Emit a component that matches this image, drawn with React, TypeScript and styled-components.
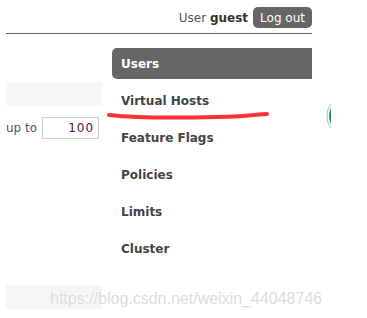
import React from 'react';
import styled, { createGlobalStyle } from 'styled-components';

const GlobalStyle = createGlobalStyle`
  html, body {
    margin: 0;
    padding: 0;
    background: #fff;
  }
  body {
    font-family: 'DejaVu Sans', Verdana, sans-serif;
    font-size: 12px;
    color: #444;
  }
`;

const Page = styled.div`
  position: relative;
  width: 367px;
  height: 318px;
  overflow: hidden;
`;

const Content = styled.div`
  width: 306px;
  margin-left: 6px;
`;

const Header = styled.header`
  display: flex;
  justify-content: flex-end;
  align-items: center;
  gap: 5px;
  height: 34px;
  padding-top: 2px;
  box-sizing: border-box;
  border-bottom: 1px solid #666;
  color: #555;
`;

const UserName = styled.b`
  color: #333;
`;

const LogoutButton = styled.button`
  font: inherit;
  color: #fff;
  background: #666;
  border: none;
  border-radius: 5px;
  height: 21px;
  padding: 0 7px;
  cursor: pointer;
`;

const Main = styled.div`
  display: flex;
  gap: 10px;
`;

const Side = styled.div`
  width: 96px;
  display: flex;
  flex-direction: column;
`;

const GreyBlock = styled.div<{ $top: number }>`
  height: 24px;
  margin-top: ${(p) => p.$top}px;
  background: #f6f6f6;
`;

const LimitRow = styled.label`
  display: flex;
  align-items: center;
  gap: 5px;
  margin-top: 11px;
  color: #555;
`;

const LimitInput = styled.input`
  width: 57px;
  height: 22px;
  box-sizing: border-box;
  border: 1px solid #ccc;
  font: inherit;
  color: #513;
  text-align: right;
  padding: 0 4px;
  letter-spacing: 1px;
`;

const Menu = styled.ul`
  list-style: none;
  margin: 14px 0 0;
  padding: 0;
  width: 200px;
`;

const MenuItem = styled.li<{ $active?: boolean }>`
  height: 31px;
  margin-bottom: 6px;
  display: flex;
  align-items: center;
  padding-left: 9px;
  font-weight: bold;
  border-radius: 5px 0 0 5px;
  color: ${(p) => (p.$active ? '#fff' : '#444')};
  background: ${(p) => (p.$active ? '#666' : 'transparent')};
`;

const Scribble = styled.svg`
  position: absolute;
  left: 106px;
  top: 111px;
`;

const Bubble = styled.svg`
  position: absolute;
  left: 324px;
  top: 100px;
`;

const Watermark = styled.div`
  position: absolute;
  left: 50px;
  top: 290px;
  font-family: 'Liberation Sans', Arial, sans-serif;
  font-size: 16px;
  color: #dcdcdc;
  text-shadow: 0 0 1px #fff;
`;

const items = ['Users', 'Virtual Hosts', 'Feature Flags', 'Policies', 'Limits', 'Cluster'];

export default function App() {
  return (
    <Page>
      <GlobalStyle />
      <Content>
        <Header>
          <span>
            User <UserName>guest</UserName>
          </span>
          <LogoutButton>Log out</LogoutButton>
        </Header>
        <Main>
          <Side>
            <GreyBlock $top={48} />
            <LimitRow>
              up to <LimitInput defaultValue="100" />
            </LimitRow>
            <GreyBlock $top={146} />
          </Side>
          <Menu>
            {items.map((it, i) => (
              <MenuItem key={it} $active={i === 0}>
                {it}
              </MenuItem>
            ))}
          </Menu>
        </Main>
      </Content>
      <Scribble width="166" height="12" viewBox="0 0 166 12">
        <path
          d="M3 4 C30 7, 70 7, 110 6 S150 3, 161 3"
          stroke="#f33"
          strokeWidth="4"
          strokeLinecap="round"
          fill="none"
        />
      </Scribble>
      <Bubble width="10" height="38" viewBox="0 0 10 38">
        <defs>
          <clipPath id="cut">
            <rect x="0" y="0" width="7" height="38" />
          </clipPath>
        </defs>
        <g clipPath="url(#cut)">
          <circle cx="22" cy="16" r="19" fill="#fff" stroke="#ccc" strokeWidth="1.5" />
          <circle cx="22" cy="16" r="17" fill="#1a9a4a" />
        </g>
      </Bubble>
      <Watermark>https://blog.csdn.net/weixin_44048746</Watermark>
    </Page>
  );
}
